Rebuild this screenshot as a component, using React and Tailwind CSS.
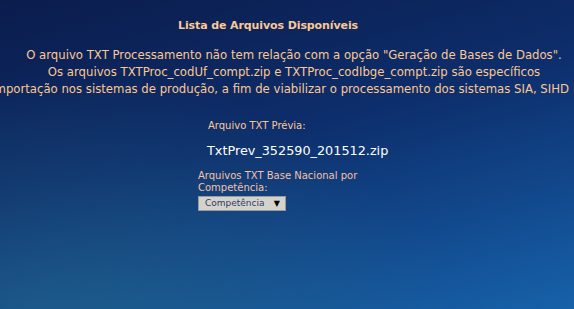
import React from 'react';

const App = () => {
  return (
    <div
      className="relative h-[309px] w-[574px] overflow-hidden bg-[linear-gradient(165deg,#0b1c4c_0%,#0d2e6c_45%,#124a8e_75%,#1762aa_100%)] font-['DejaVu_Sans',Verdana,sans-serif]"
    >
      <div className="pointer-events-none absolute inset-0 bg-[radial-gradient(ellipse_at_10%_110%,rgba(40,110,140,0.55),transparent_55%)]" />

      <div className="relative">
        <h1 className="pr-[38px] pt-[18px] text-center text-[11px] font-bold leading-[16px] tracking-[-0.1px] text-[#fcc892]">
          Lista de Arquivos Disponíveis
        </h1>

        <div className="mt-[13px] flex flex-col items-center pl-[14px] text-[11.7px] leading-[17px] text-[#fcc892]">
          <p className="whitespace-nowrap">
            O arquivo TXT Processamento não tem relação com a opção "Geração de Bases de Dados".
          </p>
          <p className="whitespace-nowrap">
            Os arquivos TXTProc_codUf_compt.zip e TXTProc_codIbge_compt.zip são específicos
          </p>
          <p className="mr-[58px] whitespace-nowrap">
            para importação nos sistemas de produção, a fim de viabilizar o processamento dos sistemas SIA, SIHD
          </p>
        </div>

        <div className="ml-[198px] mt-[21px] w-[170px]">
          <p className="pl-[10px] text-[10px] leading-[14px] text-[#fcc892]">Arquivo TXT Prévia:</p>
          <p className="mt-[10px] pl-[9px] text-[12.8px] leading-[16px] text-white">TxtPrev_352590_201512.zip</p>
          <p className="mt-[11px] text-[10px] leading-[12px] text-[#f8c0a2]">
            Arquivos TXT Base Nacional por Competência:
          </p>
          <div className="mt-[2px] flex h-[15px] w-[88px] items-center justify-between border border-[#9a9a9a] bg-[#d4d2cc] pl-[6px] pr-[5px] text-[9px] text-[#2e3c66]">
            <span>Competência</span>
            <span className="text-[8px] text-black">▼</span>
          </div>
        </div>
      </div>
    </div>
  );
};

export default App;
